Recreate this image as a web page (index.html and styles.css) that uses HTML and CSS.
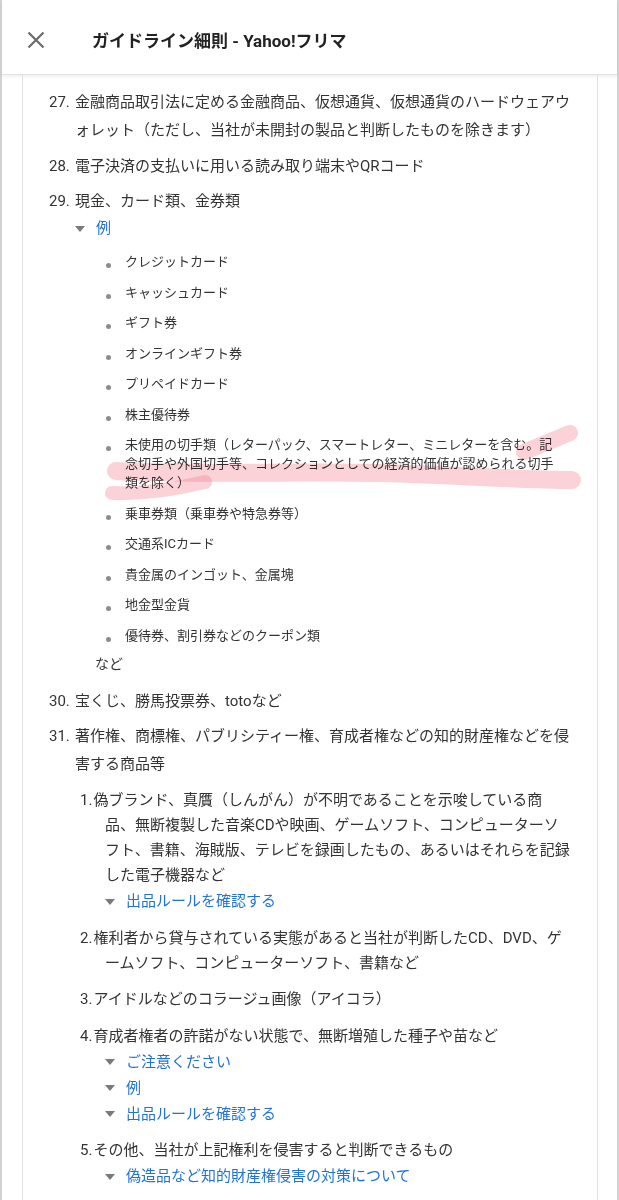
FILE: index.html
```html
<!DOCTYPE html>
<html lang="ja">
<head>
<meta charset="utf-8">
<title>ガイドライン細則 - Yahoo!フリマ</title>
<link rel="stylesheet" href="styles.css">
</head>
<body>
<div class="frame">
  <header class="topbar">
    <span class="close" aria-label="閉じる">
      <svg width="18" height="18" viewBox="0 0 18 18"><path d="M1.5 1.5 L16.5 16.5 M16.5 1.5 L1.5 16.5" stroke="#6b6b6b" stroke-width="2.2" fill="none"/></svg>
    </span>
    <h1 class="title">ガイドライン細則 - Yahoo!フリマ</h1>
  </header>
  <main class="card">
    <ol class="rules">
      <li><span class="num">27.</span>金融商品取引法に定める金融商品、仮想通貨、仮想通貨のハードウェアウ<br>ォレット（ただし、当社が未開封の製品と判断したものを除きます）</li>
      <li><span class="num">28.</span>電子決済の支払いに用いる読み取り端末やQRコード</li>
      <li><span class="num">29.</span>現金、カード類、金券類
        <div class="toggle"><span class="tri"></span><a class="link">例</a></div>
        <ul class="examples">
          <li>クレジットカード</li>
          <li>キャッシュカード</li>
          <li>ギフト券</li>
          <li>オンラインギフト券</li>
          <li>プリペイドカード</li>
          <li>株主優待券</li>
          <li>未使用の切手類（レターパック、スマートレター、ミニレターを含む。記<br>念切手や外国切手等、コレクションとしての経済的価値が認められる切手<br>類を除く）</li>
          <li>乗車券類（乗車券や特急券等）</li>
          <li>交通系ICカード</li>
          <li>貴金属のインゴット、金属塊</li>
          <li>地金型金貨</li>
          <li>優待券、割引券などのクーポン類</li>
        </ul>
        <p class="etc">など</p>
      </li>
      <li><span class="num">30.</span>宝くじ、勝馬投票券、totoなど</li>
      <li><span class="num">31.</span>著作権、商標権、パブリシティー権、育成者権などの知的財産権などを侵<br>害する商品等
        <ol class="sub">
          <li><span class="num">1.</span>偽ブランド、真贋（しんがん）が不明であることを示唆している商<br>品、無断複製した音楽CDや映画、ゲームソフト、コンピューターソ<br>フト、書籍、海賊版、テレビを録画したもの、あるいはそれらを記録<br>した電子機器など
            <div class="toggle"><span class="tri"></span><a class="link">出品ルールを確認する</a></div>
          </li>
          <li><span class="num">2.</span>権利者から貸与されている実態があると当社が判断したCD、DVD、ゲ<br>ームソフト、コンピューターソフト、書籍など</li>
          <li><span class="num">3.</span>アイドルなどのコラージュ画像（アイコラ）</li>
          <li><span class="num">4.</span>育成者権者の許諾がない状態で、無断増殖した種子や苗など
            <div class="toggle"><span class="tri"></span><a class="link">ご注意ください</a></div>
            <div class="toggle"><span class="tri"></span><a class="link">例</a></div>
            <div class="toggle"><span class="tri"></span><a class="link">出品ルールを確認する</a></div>
          </li>
          <li><span class="num">5.</span>その他、当社が上記権利を侵害すると判断できるもの
            <div class="toggle"><span class="tri"></span><a class="link">偽造品など知的財産権侵害の対策について</a></div>
          </li>
        </ol>
      </li>
    </ol>
  </main>
</div>
<svg class="marker" width="619" height="1200" viewBox="0 0 619 1200">
  <g stroke="rgba(240,115,135,0.32)" fill="none" stroke-linecap="round" stroke-linejoin="round">
    <path d="M524 452 L570 433" stroke-width="16"/>
    <path d="M116 471 C200 475 300 471 380 473 C460 475 520 480 572 480" stroke-width="18"/>
    <path d="M112 493 C140 494 172 490 205 482" stroke-width="14"/>
  </g>
</svg>
</body>
</html>
```
FILE: styles.css
```css
html, body {
  margin: 0;
  padding: 0;
  background: #ffffff;
}

body {
  position: relative;
  font-family: Roboto, "Noto Sans CJK JP", sans-serif;
  color: #333333;
}

.frame {
  display: flex;
  flex-direction: column;
  min-height: 1200px;
  border-left: 2px solid #d2d2d2;
  border-right: 2px solid #d2d2d2;
  box-sizing: border-box;
}

.topbar {
  display: flex;
  align-items: center;
  height: 75px;
  box-sizing: border-box;
  padding: 5px 0 0 25px;
  border-bottom: 1px solid #e2e2e2;
  box-shadow: 0 2px 3px rgba(0, 0, 0, 0.06);
  background: #fff;
}

.close {
  display: flex;
  width: 18px;
  height: 18px;
  margin-right: 47px;
}

.title {
  margin: 0;
  font-size: 17px;
  font-weight: 700;
  color: #222222;
  letter-spacing: 0;
}

.card {
  flex: 1;
  margin: 0 19px 0 20px;
  padding: 13px 10px 0 26px;
  border-left: 1px solid #e0e0e0;
  border-right: 1px solid #e0e0e0;
}

.rules {
  list-style: none;
  margin: 0;
  padding: 0;
  font-size: 15px;
}

.rules > li {
  position: relative;
  padding-left: 26px;
  line-height: 28px;
  margin-bottom: 7.5px;
}

.num {
  display: inline-block;
  width: 26px;
  margin-left: -26px;
}

.toggle {
  display: flex;
  align-items: center;
  line-height: 26px;
}

.tri {
  width: 0;
  height: 0;
  border-left: 5px solid transparent;
  border-right: 5px solid transparent;
  border-top: 6px solid #7a7a7a;
  margin: 1px 11px 0 0;
}

.link {
  color: #1f72dc;
  text-decoration: none;
}

.examples {
  list-style: none;
  margin: 0;
  padding: 11px 0 0 50px;
  font-size: 13px;
}

.examples li {
  position: relative;
  line-height: 19px;
  margin-bottom: 11.5px;
}

.examples li::before {
  content: "";
  position: absolute;
  left: -19.5px;
  top: 11px;
  width: 5px;
  height: 5px;
  border-radius: 50%;
  background: #8c8c8c;
}

.etc {
  margin: -1px 0 0 20px;
  padding-bottom: 6px;
  font-size: 14px;
  line-height: 18px;
}

.sub {
  list-style: none;
  margin: 10px 0 0 5px;
  padding: 0;
}

.sub > li {
  padding-left: 25px;
  line-height: 25px;
  margin-bottom: 11.5px;
}

.sub .num {
  width: 13.5px;
  margin-left: -25px;
}

.marker {
  position: absolute;
  left: 0;
  top: 0;
  pointer-events: none;
  mix-blend-mode: multiply;
}
```
